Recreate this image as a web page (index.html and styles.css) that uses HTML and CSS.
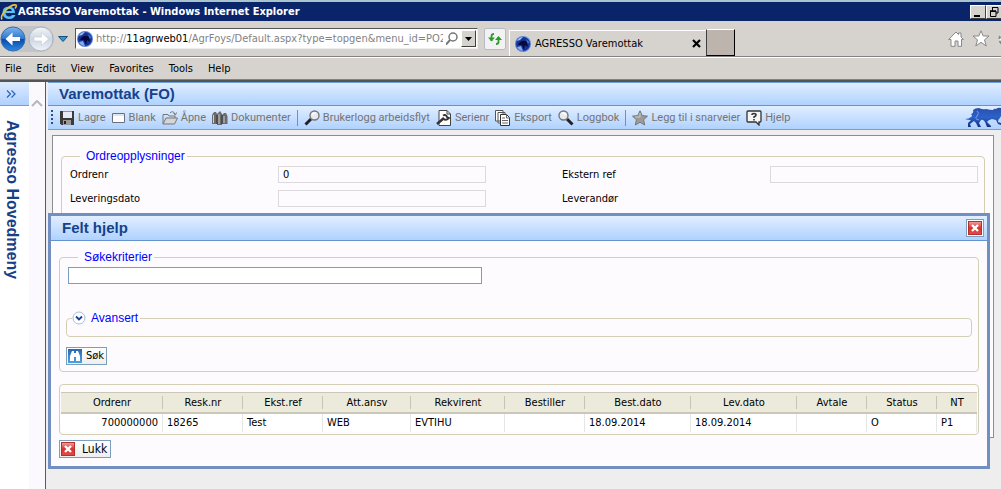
FILE: index.html
```
<!DOCTYPE html>
<html lang="no">
<head>
<meta charset="utf-8">
<title>AGRESSO Varemottak</title>
<link rel="stylesheet" href="styles.css">
</head>
<body>
<svg class="defs" aria-hidden="true">
  <defs>
    <linearGradient id="ball" x1="0" y1="0" x2="0" y2="1"><stop offset="0" stop-color="#7fb6ee"/><stop offset=".48" stop-color="#2f77cc"/><stop offset=".52" stop-color="#0d4ba8"/><stop offset="1" stop-color="#2b8be6"/></linearGradient>
    <linearGradient id="pale" x1="0" y1="0" x2="0" y2="1"><stop offset="0" stop-color="#f4f7fa"/><stop offset=".5" stop-color="#ccd6e2"/><stop offset="1" stop-color="#eef4fa"/></linearGradient>
    <linearGradient id="red" x1="0" y1="0" x2="0" y2="1"><stop offset="0" stop-color="#ee9a94"/><stop offset=".5" stop-color="#d8322f"/><stop offset="1" stop-color="#e04a46"/></linearGradient>
    <linearGradient id="blue" x1="0" y1="0" x2="0" y2="1"><stop offset="0" stop-color="#2d66b0"/><stop offset="1" stop-color="#4aa3e6"/></linearGradient>
    <linearGradient id="bull" x1="0" y1="0" x2="0" y2="1"><stop offset="0" stop-color="#2a4fa6"/><stop offset=".5" stop-color="#2c62cc"/><stop offset="1" stop-color="#14307e"/></linearGradient>
    <symbol id="favicon" viewBox="0 0 16 16"><circle cx="8" cy="8" r="8" fill="#5b86d2"/><circle cx="8" cy="8" r="7" fill="#17339a"/><path d="M2 5Q4 1 8 1L5 4Z" fill="#a9c6f2"/><path d="M4 7Q8 3 12 6L13 11L10 9L9 14L7 9L3 9Z" fill="#050a3a"/><path d="M2 11L6 10L8 15Q4 15 2 11Z" fill="#86aceb"/><path d="M11 3L14 6L13 8Z" fill="#4d7fd9"/></symbol>
    <symbol id="cross" viewBox="0 0 14 14"><rect width="14" height="14" fill="#b3302e"/><rect x="1" y="1" width="12" height="12" fill="url(#red)"/><path d="M4 4L10 10M10 4L4 10" stroke="#fff" stroke-width="2.4"/></symbol>
    <symbol id="lens" viewBox="0 0 16 16"><path d="M1.500 14.500L7 9" stroke="#222" stroke-width="3"/><circle cx="10.500" cy="5.500" r="4.500" fill="#e6ebf2" stroke="#777" stroke-width="1.400"/><path d="M8 5Q9 2.500 12 3" stroke="#fff" stroke-width="1.500" fill="none"/></symbol>
  </defs>
</svg>

<header class="browser">
  <div class="titlebar">
    <svg class="ie" viewBox="0 0 18 18"><path d="M14 10H5.500Q6 13.500 9 13.500Q11 13.500 12 12H15.500Q14 16 9 16Q2.500 16 2.500 9.500Q2.500 3.500 9 3.500Q15 3.500 15 10ZM5.700 8H12Q11.500 5.700 9 5.700Q6.500 5.700 5.700 8Z" fill="#59c2f5"/><path d="M2 16.500Q0 13 6 7T16 2Q17 3 15 5.500" fill="none" stroke="#f2c230" stroke-width="1.600"/></svg>
    <h1 class="window-title">AGRESSO Varemottak - Windows Internet Explorer</h1>
    <button class="win-btn" aria-label="Minimize"><svg viewBox="0 0 14 12"><path d="M3 9h6v2H3z"/></svg></button>
    <button class="win-btn" aria-label="Restore"><svg viewBox="0 0 14 12"><path d="M5.500 1v4M5 1.500h6V7H9M3 5h6v5.500H3.500V5" fill="none" stroke="#000"/><path d="M5 1h6v1H5zM3 4.500h6v1.500H3z"/></svg></button>
  </div>
  <div class="address-row">
    <div class="history">
      <button class="bare" aria-label="Back"><svg width="26" height="26" viewBox="0 0 26 26"><circle cx="13" cy="13" r="12" fill="url(#ball)" stroke="#3c6daf"/><path d="M5.500 13L12.500 6.500V11H20V15H12.500V19.500Z" fill="#fff"/></svg></button>
      <button class="bare" aria-label="Forward"><svg width="26" height="26" viewBox="0 0 26 26"><circle cx="13" cy="13" r="12" fill="url(#pale)" stroke="#aab4c2"/><path d="M20.500 13L13.500 6.500V11H6V15H13.500V19.500Z" fill="#fff" stroke="#c4ccd6" stroke-width=".6"/></svg></button>
    </div>
    <button class="bare" aria-label="Recent pages"><svg width="10" height="6" viewBox="0 0 10 6"><path d="M.5 .5h9L5 5.500Z" fill="#2c9ad0" stroke="#1a4f7c"/></svg></button>
    <div class="address">
      <svg width="16" height="16"><use href="#favicon"/></svg>
      <a class="url" href="#">http://<b>11agrweb01</b>/AgrFoys/Default.aspx?type=topgen&amp;menu_id=PO2</a>
      <button class="bare" aria-label="Search"><svg width="12" height="14" viewBox="0 0 12 14"><circle cx="7" cy="5" r="4" fill="none" stroke="#777" stroke-width="1.500"/><path d="M4 8L0 12.500" stroke="#777" stroke-width="2"/></svg></button>
      <button class="drop" aria-label="Show addresses"><svg width="8" height="4" viewBox="0 0 8 4"><path d="M0 0h7L3.500 4Z"/></svg></button>
    </div>
    <button class="refresh" aria-label="Refresh"><svg width="14" height="14" viewBox="0 0 14 14"><path d="M3.500 9V4Q3.500 2 6 2M10.500 5V10Q10.500 12 8 12" fill="none" stroke="#2f9a2c" stroke-width="1.800"/><path d="M0 5.500H7L3.500 9.500ZM7 8H14L10.500 4Z" fill="#2f9a2c"/></svg></button>
    <div class="tab">
      <svg width="16" height="16"><use href="#favicon"/></svg>
      <span class="tab-name">AGRESSO Varemottak</span>
      <button class="bare" aria-label="Close tab"><svg width="9" height="9" viewBox="0 0 9 9"><path d="M1 1L8 8M8 1L1 8" stroke="#000" stroke-width="2.200"/></svg></button>
    </div>
    <button class="new-tab" aria-label="New tab"></button>
    <div class="tools">
      <button class="bare" aria-label="Home"><svg width="16" height="16" viewBox="0 0 16 16"><path d="M.7 8.500L8 1L10.500 3.500V2H13V6L15.300 8.500H13.500V15.300H10V10H7V15.300H3V8.500Z" fill="#fff" stroke="#888"/></svg></button>
      <button class="bare" aria-label="Favorites"><svg width="18" height="17" viewBox="0 0 18 17"><path d="M9 .8L11.200 6H17L12.500 9.800L14.200 16L9 12.300L3.800 16L5.500 9.800L1 6H6.800Z" fill="#fff" stroke="#888"/></svg></button>
      <button class="bare" aria-label="Settings"><svg width="16" height="16" viewBox="0 0 16 16"><circle cx="8" cy="8" r="6.500" fill="#fff" stroke="#888" stroke-width="2" stroke-dasharray="3 2"/><circle cx="8" cy="8" r="2" fill="#d6d3ce" stroke="#888"/></svg></button>
    </div>
  </div>
  <nav class="menu">
    <button class="bare">File</button><button class="bare">Edit</button><button class="bare">View</button><button class="bare">Favorites</button><button class="bare">Tools</button><button class="bare">Help</button>
  </nav>
</header>

<div class="page">
  <aside class="sidebar">
    <div class="side-menu">
      <button class="expand" aria-label="Expand menu"><svg width="10" height="8" viewBox="0 0 10 8"><path d="M1 .5L4.500 4L1 7.500M5.500 .5L9 4L5.500 7.500" fill="none" stroke="#2c62b8" stroke-width="1.200"/></svg></button>
      <h2 class="side-title">Agresso Hovedmeny</h2>
    </div>
    <div class="side-scroll"><svg width="12" height="7" viewBox="0 0 12 7"><path d="M1 6L6 1L11 6" fill="none" stroke="#b8b6b8" stroke-width="2"/></svg></div>
  </aside>

  <main class="content">
    <h2 class="bar">Varemottak (FO)</h2>
    <div class="toolbar">
      <span class="grip"></span>
      <button class="tool"><svg width="16" height="16" viewBox="0 0 16 16"><path d="M1 1H15V15H2.500L1 13.500Z" fill="#3b3b3b"/><path d="M4 1.500h9V8H4z" fill="#e8ecf2"/><path d="M4 10h8v5H4z" fill="#9a9a9a"/><path d="M5 11h2v3H5z" fill="#222"/></svg>Lagre</button>
      <button class="tool blank"><svg width="13" height="10" viewBox="0 0 13 10"><path d="M.5 .5h12v9H.5z" fill="#fff" stroke="#69717e"/><path d="M1 1h11v2H1z" fill="#dfe5ee"/></svg>Blank</button>
      <button class="tool"><svg width="16" height="16" viewBox="0 0 16 16"><path d="M1 14V4.500H6L7 6H13V8M8 3Q11 0 13 4M11.500 3.500L13.500 5L14.500 2.500" fill="none" stroke="#777"/><path d="M1 14L4 8H15.500L12.500 14Z" fill="#d5d5d5" stroke="#777"/></svg>Åpne</button>
      <button class="tool"><svg width="16" height="16" viewBox="0 0 16 16"><path d="M0 5L2 2H4L5 4V14H0ZM5 4L8 1L10 4V15H5ZM10 5L12 3L14 3L15.500 6V14H10Z" fill="#6b6b6b"/><path d="M1.500 5V13M7 4V14M12 6V13" stroke="#cfcfcf"/><path d="M5 5V14M10 5V14" stroke="#333"/></svg>Dokumenter</button>
      <span class="sep"></span>
      <button class="tool"><svg width="16" height="16"><use href="#lens"/></svg>Brukerlogg arbeidsflyt</button>
      <button class="tool"><svg width="16" height="16" viewBox="0 0 16 16"><path d="M3 .5H11L14.500 4V15.500H3Z" fill="#fff" stroke="#444"/><path d="M11 .5V4H14.500" fill="none" stroke="#444"/><path d="M1 14L8 8" stroke="#333" stroke-width="2.500"/><path d="M7 5.500Q10 4 11 7L13 8Q10 11 7.500 9" fill="none" stroke="#333" stroke-width="1.800"/></svg>Serienr</button>
      <button class="tool"><svg width="16" height="16" viewBox="0 0 16 16"><path d="M.5 .5H8V11H.5ZM3 2.500H10V13H3Z" fill="#fff" stroke="#555"/><path d="M5.500 4.500H11.500L14.500 7.500V15.500H5.500Z" fill="#fff" stroke="#333"/><path d="M11.500 5V8H14.500M7 8H10M7 10.500H13M7 13H13" fill="none" stroke="#666"/></svg>Eksport</button>
      <button class="tool"><svg class="flip" width="16" height="16"><use href="#lens"/></svg>Loggbok</button>
      <span class="sep"></span>
      <button class="tool"><svg width="16" height="16" viewBox="0 0 16 16"><path d="M8 .8L10.200 5.600L15.500 6.200L11.600 9.700L12.700 15L8 12.300L3.300 15L4.400 9.700L.5 6.200L5.800 5.600Z" fill="#9b9b9b" stroke="#777"/><path d="M8 3V7L3 7" stroke="#ccc" fill="none"/></svg>Legg til i snarveier</button>
      <button class="tool"><svg width="16" height="16" viewBox="0 0 16 16"><path d="M2 1H14Q15 1 15 2V11Q15 12 14 12H13V15L10 12H2Q1 12 1 11V2Q1 1 2 1Z" fill="#f4f4f4" stroke="#333" stroke-width="1.300"/><path d="M6 5Q6 3.500 8 3.500T10 5Q10 6 8 7V8M8 9V10.500" fill="none" stroke="#333" stroke-width="1.600"/></svg>Hjelp</button>
      <svg class="bull" width="36" height="21" viewBox="0 0 36 21"><path d="M0 12Q4 12 6 10Q8 9 6 7Q9 6 8 3Q10 1 14 1Q18 3 21 2Q25 3 28 3Q29 1 31 2Q33 0 36 1V9L35 11Q33 12 33 15L36 16V18L33 17L31 13L27 12Q23 13 22 15L26 19V20H22L20 15Q18 12 16 13L14 16L16 20H13L11 16L9 14L5 17L6 20H3L3 16L6 13Q3 13 0 12Z" fill="url(#bull)"/><path d="M12 4Q15 6 12 9T14 13" stroke="#7aa0ea" fill="none"/></svg>
    </div>

    <div class="workspace">
      <section class="panel">
        <fieldset class="box order">
          <legend>Ordreopplysninger</legend>
          <div class="fields">
            <div class="field"><label for="ordrenr">Ordrenr</label><input id="ordrenr" value="0"></div>
            <div class="field"><label for="ekstern">Ekstern ref</label><input id="ekstern"></div>
            <div class="field"><label for="dato">Leveringsdato</label><input id="dato"></div>
            <div class="field"><span>Leverandør</span></div>
          </div>
        </fieldset>
      </section>
    </div>

    <section class="dialog" role="dialog" aria-labelledby="dlg-title">
      <div class="bar dialog-bar">
        <h2 id="dlg-title">Felt hjelp</h2>
        <button class="close" aria-label="Lukk"><svg width="14" height="14"><use href="#cross"/></svg></button>
      </div>
      <div class="dialog-body">
        <fieldset class="box search">
          <legend>Søkekriterier</legend>
          <input class="query" aria-label="Søkekriterier">
          <fieldset class="box advanced">
            <legend><button class="toggle"><svg width="14" height="14" viewBox="0 0 14 14"><circle cx="7" cy="7" r="6" fill="#fff" stroke="#a9bbdc"/><path d="M4 5.500L7 8.500L10 5.500" fill="none" stroke="#1c3f94" stroke-width="1.800"/></svg>Avansert</button></legend>
          </fieldset>
          <button class="action"><svg width="14" height="14" viewBox="0 0 14 14"><rect width="14" height="14" fill="url(#blue)"/><path d="M4 2H6V4H8V2H10L12 7V12H8V8H6V12H2V7Z" fill="#fff"/></svg>Søk</button>
        </fieldset>
        <div class="box results">
          <table>
            <colgroup><col class="w102"><col class="w80"><col class="w80"><col class="w88"><col class="w94"><col class="w80"><col class="w106"><col class="w106"><col class="w70"><col class="w70"><col class="w40"></colgroup>
            <thead><tr><th>Ordrenr</th><th>Resk.nr</th><th>Ekst.ref</th><th>Att.ansv</th><th>Rekvirent</th><th>Bestiller</th><th>Best.dato</th><th>Lev.dato</th><th>Avtale</th><th>Status</th><th>NT</th></tr></thead>
            <tbody><tr><td class="num">700000000</td><td>18265</td><td>Test</td><td>WEB</td><td>EVTIHU</td><td></td><td>18.09.2014</td><td>18.09.2014</td><td></td><td>O</td><td>P1</td></tr></tbody>
          </table>
        </div>
        <button class="action lukk"><svg width="14" height="14"><use href="#cross"/></svg>Lukk</button>
      </div>
    </section>
  </main>
</div>
</body>
</html>
```
FILE: styles.css
```
* { box-sizing: border-box; }

body {
  margin: 0;
  min-height: 100vh;
  display: flex;
  flex-direction: column;
  overflow: hidden;
  background: #eee;
  color: #000;
  font: 11px/14px "DejaVu Sans Condensed", "Noto Sans", sans-serif;
}

button, input { font: inherit; color: inherit; }
button { padding: 0; border: 0; background: none; }
h1, h2 { margin: 0; }
svg { flex: none; display: block; }
.defs { position: absolute; width: 0; height: 0; }

/* Browser frame */
.browser {
  background: #d6d3ce;
  border-bottom: 2px solid #555;
}

.titlebar {
  display: flex;
  align-items: center;
  height: 21px;
  overflow: hidden;
  border-top: 2px solid #a9c3cf;
  background: #0a246a;
  color: #fff;
}
.ie { width: 18px; height: 18px; }
.window-title { flex: 1; font: bold 11px/14px "DejaVu Sans Condensed", sans-serif; white-space: nowrap; }
.win-btn {
  flex: none;
  width: 16px;
  height: 14px;
  background: #d6d3ce;
  border: 1px solid;
  border-color: #fff #404040 #404040 #fff;
}
.win-btn:last-child { margin-right: -1px; }

.address-row {
  display: flex;
  align-items: center;
  height: 36px;
  overflow: hidden;
  border-bottom: 1px solid #848284;
}
.history { display: flex; gap: 2px; margin: 0 4px 0 0; border-radius: 13px; background: #c2c4c8; }
.address {
  display: flex;
  align-items: center;
  gap: 3px;
  flex: none;
  width: 403px;
  height: 21px;
  margin-left: 7px;
  padding: 0 1px;
  background: #fff;
  border: 1px solid;
  border-color: #555 #eee #eee #555;
}
.url { flex: 1; overflow: hidden; white-space: nowrap; color: #848284; text-decoration: none; }
.url b { color: #000; font-weight: normal; }
.drop {
  display: grid;
  place-items: center;
  width: 15px;
  height: 17px;
  background: #d6d3ce;
  border: 1px solid;
  border-color: #fff #404040 #404040 #fff;
}
.refresh {
  flex: none;
  display: grid;
  place-items: center;
  width: 22px;
  height: 22px;
  margin: 0 3px 0 6px;
  border: 1px solid #b5bcc8;
  border-radius: 2px;
  background: #f2f2f4;
}
.tab {
  align-self: flex-end;
  display: flex;
  align-items: center;
  gap: 4px;
  width: 197px;
  height: 26px;
  padding: 0 5px;
  border: solid #fff;
  border-width: 1px 0 0 1px;
}
.tab-name { flex: 1; }
.new-tab {
  align-self: flex-end;
  width: 29px;
  height: 27px;
  background: #bdb5ad;
  border: 1px solid;
  border-color: #fff #000 #000 #404040;
}
.tools { flex: none; display: flex; align-items: center; gap: 8px; margin: 0 -13px 0 auto; }

.menu {
  display: flex;
  gap: 15px;
  height: 23px;
  padding: 0 5px;
  border-top: 1px solid #fff;
  border-bottom: 1px solid #848284;
}

/* Page */
.page { flex: 1; display: flex; }
.sidebar { display: flex; width: 46px; margin-right: 2px; background: #fff; border-right: 1px solid #2a5ec0; }
.side-menu { width: 29px; }
.expand {
  display: grid;
  place-items: center;
  width: 29px;
  height: 24px;
  padding-right: 8px;
  border-bottom: 1px solid #6ea0dc;
  background: linear-gradient(#dcebff, #b0d0ff);
}
.side-title {
  margin: 14px 0 0 3px;
  writing-mode: vertical-rl;
  color: #164087;
  font: bold 16px/18px "Liberation Sans", sans-serif;
}
.side-scroll { flex: 1; padding: 18px 0 0 2px; background: #fcf9fe; }

.content { position: relative; flex: 1; min-width: 0; }
.bar {
  height: 24px;
  padding: 0 11px;
  border-top: 1px solid #6ea0dc;
  border-bottom: 1px solid #6593cf;
  background: linear-gradient(#e1eeff, #b0d2ff);
  color: #15428b;
  font: bold 15px/22px "Liberation Sans", sans-serif;
}
.toolbar {
  display: flex;
  align-items: center;
  gap: 6px;
  height: 24px;
  padding-left: 3px;
  overflow: hidden;
  border-bottom: 1px solid #6ea0dc;
  background: linear-gradient(#e1eeff, #b0d2ff);
  color: #747474;
}
.grip { width: 2px; height: 16px; background: repeating-linear-gradient(#2a4f9a 0 2px, transparent 2px 4px); }
.tool { display: flex; align-items: center; gap: 3px; white-space: nowrap; font-family: Roboto, sans-serif; }
.blank { gap: 4px; }
.sep { width: 1px; height: 16px; background: #6593cf; }
.bull { margin-left: auto; }
.flip { transform: scaleX(-1); }

.workspace { padding: 5px 7px 0 4px; }
.panel { height: 303px; padding: 13px 8px; border: 1px solid #8c8e93; background: #fefbff; }

.box { min-width: 0; margin: 0; padding: 0; border: 1px solid #d2cfb5; border-radius: 4px; }
.box legend { padding: 0 2px 0 6px; color: #00f; font: 12px/14px "Liberation Sans", sans-serif; }
.order { height: 200px; padding: 3px 6px 0 8px; }
.order legend { margin-left: 10px; }
.fields { display: grid; grid-template-columns: 1fr 1fr; gap: 7px 76px; }
.field { display: grid; grid-template-columns: 1fr 1fr; align-items: center; height: 17px; }
.field input {
  width: 100%;
  min-width: 0;
  height: 17px;
  padding: 0 4px;
  border: 1px solid #dddade;
  background: transparent;
}

/* Lookup dialog */
.dialog {
  position: absolute;
  top: 131px;
  left: 0;
  right: 11px;
  border: 3px solid #728fc1;
  background: #fefbff;
}
.dialog-bar { display: flex; align-items: center; height: 25px; padding-right: 3px; border-top: 0; }
.dialog-bar h2 { flex: 1; font: inherit; }
.close { display: grid; place-items: center; width: 18px; height: 18px; border: 1px solid #7b9ebd; background: #fff; }
.dialog-body { padding: 9px 8px 8px; }
.search { padding: 3px 6px 6px 8px; }
.search > legend { margin-left: 10px; }
.query { display: block; width: 414px; max-width: 100%; height: 17px; padding: 0 4px; border: 1px solid #7b9ebd; background: #fff; }
.advanced { height: 26px; margin: 27px 0 10px -2px; }
.advanced legend { margin-left: 5px; padding-left: 0; }
.toggle { display: flex; align-items: center; gap: 5px; }
.action {
  display: flex;
  align-items: center;
  gap: 4px;
  height: 18px;
  padding: 0 2px 0 1px;
  border: 1px solid #7b9ebd;
  background: linear-gradient(#fff, #eee);
}
.search .action { margin-left: -2px; }
.results { margin: 12px 0 5px; padding: 7px 1px 2px; }
.lukk { gap: 7px; padding-right: 3px; font-size: 12px; }

table { width: 100%; border-collapse: separate; border-spacing: 0; table-layout: fixed; }
.w102 { width: 102px; }
.w80 { width: 80px; }
.w88 { width: 88px; }
.w94 { width: 94px; }
.w106 { width: 106px; }
.w70 { width: 70px; }
.w40 { width: 40px; }
th {
  height: 22px;
  padding: 0;
  font-weight: normal;
  border-top: 1px solid #cbc7b8;
  border-bottom: 2px solid #cbc7b8;
  background: linear-gradient(#c7c5b2, #c7c5b2) right center / 1px 13px no-repeat, #ebeadb;
}
th:last-child { background: #ebeadb; }
td { height: 18px; padding: 0 4px; border-right: 1px solid #e6e6e6; background: #fff; }
.num { text-align: right; }
```
